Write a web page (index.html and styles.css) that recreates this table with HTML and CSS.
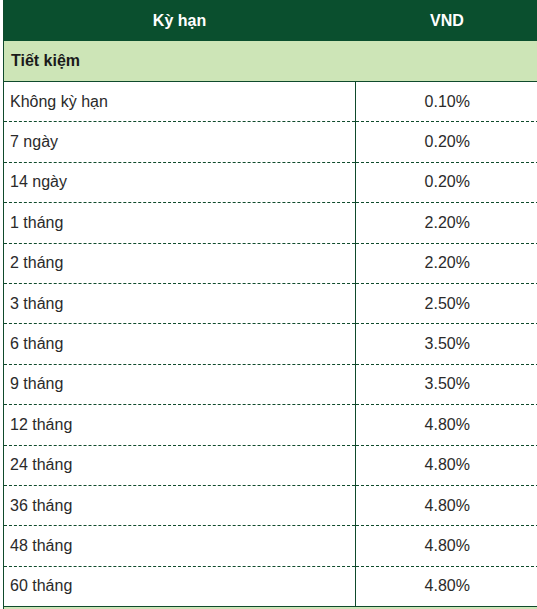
FILE: index.html
```html
<!DOCTYPE html>
<html>
<head>
<meta charset="utf-8">
<link rel="stylesheet" href="styles.css">
</head>
<body>
<table class="rates">
  <thead>
    <tr class="head"><th class="c1">Kỳ hạn</th><th class="c2">VND</th></tr>
  </thead>
  <tbody>
    <tr class="group"><td colspan="2">Tiết kiệm</td></tr>
    <tr><td class="term">Không kỳ hạn</td><td class="val">0.10%</td></tr>
    <tr><td class="term">7 ngày</td><td class="val">0.20%</td></tr>
    <tr><td class="term">14 ngày</td><td class="val">0.20%</td></tr>
    <tr><td class="term">1 tháng</td><td class="val">2.20%</td></tr>
    <tr><td class="term">2 tháng</td><td class="val">2.20%</td></tr>
    <tr><td class="term">3 tháng</td><td class="val">2.50%</td></tr>
    <tr><td class="term">6 tháng</td><td class="val">3.50%</td></tr>
    <tr><td class="term">9 tháng</td><td class="val">3.50%</td></tr>
    <tr><td class="term">12 tháng</td><td class="val">4.80%</td></tr>
    <tr><td class="term">24 tháng</td><td class="val">4.80%</td></tr>
    <tr><td class="term">36 tháng</td><td class="val">4.80%</td></tr>
    <tr><td class="term">48 tháng</td><td class="val">4.80%</td></tr>
    <tr class="last"><td class="term">60 tháng</td><td class="val">4.80%</td></tr>
    <tr class="foot"><td colspan="2"></td></tr>
  </tbody>
</table>
</body>
</html>
```
FILE: styles.css
```css
html, body {
  margin: 0;
  padding: 0;
  background: #ffffff;
}
body {
  padding-left: 3px;
  font-family: "Liberation Sans", Arial, sans-serif;
  font-size: 16px;
  color: #2a2a2a;
}
.rates {
  border-collapse: collapse;
  width: 535px;
  table-layout: fixed;
  border-left: 1px solid #0f4a2c;
}
.c1 { width: 351px; }
.c2 { width: 184px; }
.head th {
  background: #0a4f2e;
  color: #ffffff;
  font-weight: bold;
  height: 41px;
  padding: 0;
  text-align: center;
  vertical-align: middle;
}
.group td {
  background: #cde5b7;
  font-weight: bold;
  color: #1a1a1a;
  height: 40px;
  padding: 0 0 0 7px;
  border-bottom: 1px solid #0f4a2c;
}
tbody tr td {
  height: 39.4px;
  padding: 0;
  vertical-align: middle;
  border-bottom: 1px dashed #0f4a2c;
}
tbody tr.last td {
  border-bottom: 1px solid #0f4a2c;
}
tbody tr.foot td {
  height: 4px;
  background: #cde5b7;
  border: none;
}
td.term {
  padding-left: 6px;
  border-right: 1px solid #0f4a2c;
}
td.val {
  text-align: center;
}
```
